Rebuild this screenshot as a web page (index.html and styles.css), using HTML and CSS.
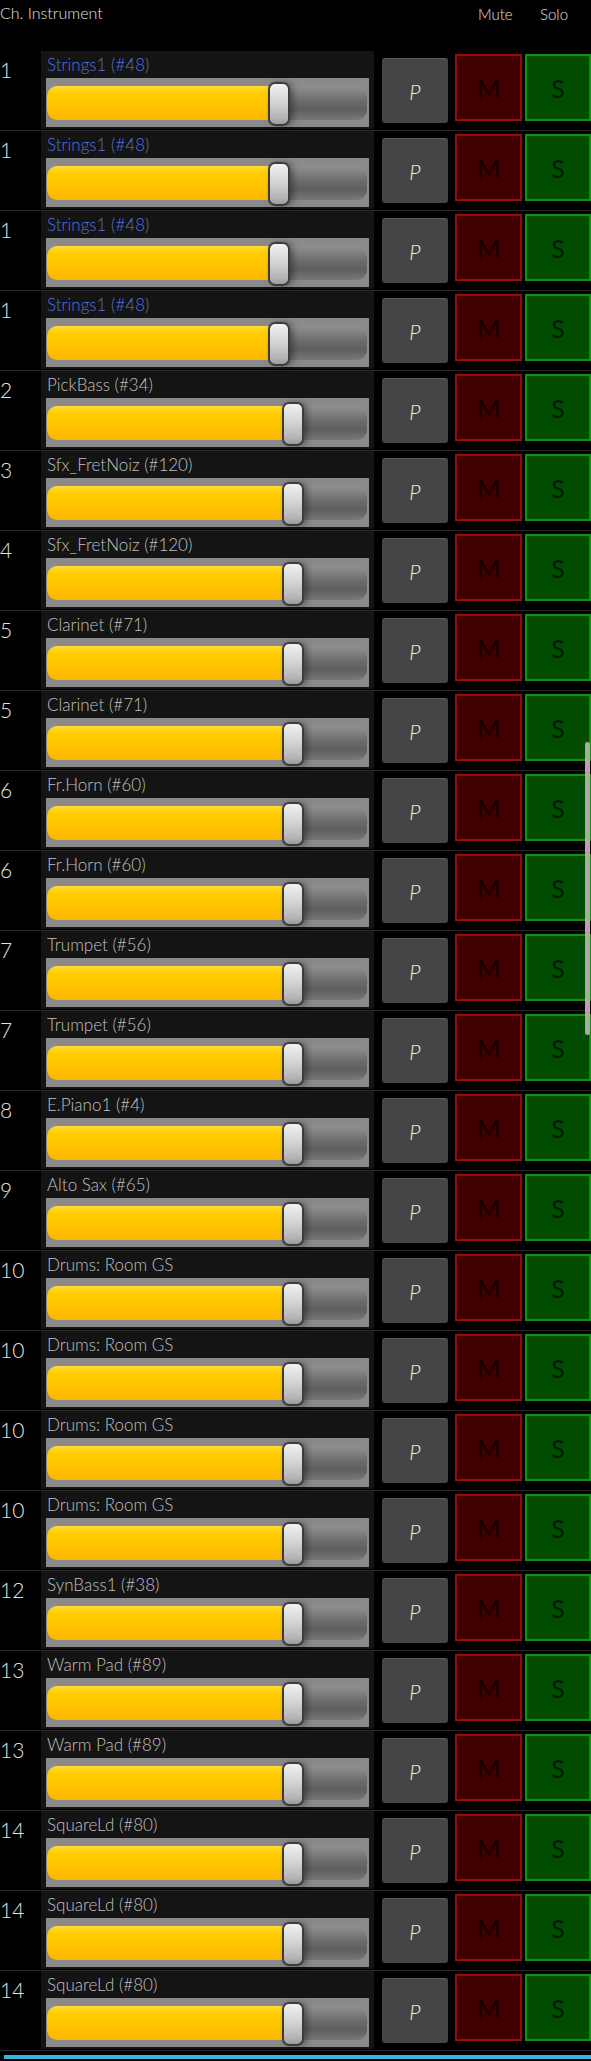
FILE: index.html
```html
<!DOCTYPE html>
<html lang="en">
<head>
    <meta charset="UTF-8">
    <meta name="viewport" content="width=device-width, initial-scale=1.0">
    <title>Mixer</title>
    <link rel="stylesheet" href="styles.css">
</head>
<body>
    <div class="header">
        <span class="title">Ch. Instrument</span>
        <span class="col-mute">Mute</span>
        <span class="col-solo">Solo</span>
    </div>

    <div id="channels"></div>

    <div class="edge-glow"></div>
    <div class="scrollbar"></div>

    <script>
        // channel, program name, selected, thumb offset in px
        const channels = [
            [1, 'Strings1 (#48)', true, 221],
            [1, 'Strings1 (#48)', true, 221],
            [1, 'Strings1 (#48)', true, 221],
            [1, 'Strings1 (#48)', true, 221],
            [2, 'PickBass (#34)', false, 235],
            [3, 'Sfx_FretNoiz (#120)', false, 235],
            [4, 'Sfx_FretNoiz (#120)', false, 235],
            [5, 'Clarinet (#71)', false, 235],
            [5, 'Clarinet (#71)', false, 235],
            [6, 'Fr.Horn (#60)', false, 235],
            [6, 'Fr.Horn (#60)', false, 235],
            [7, 'Trumpet (#56)', false, 235],
            [7, 'Trumpet (#56)', false, 235],
            [8, 'E.Piano1 (#4)', false, 235],
            [9, 'Alto Sax (#65)', false, 235],
            [10, 'Drums: Room GS', false, 235],
            [10, 'Drums: Room GS', false, 235],
            [10, 'Drums: Room GS', false, 235],
            [10, 'Drums: Room GS', false, 235],
            [12, 'SynBass1 (#38)', false, 235],
            [13, 'Warm Pad (#89)', false, 235],
            [13, 'Warm Pad (#89)', false, 235],
            [14, 'SquareLd (#80)', false, 235],
            [14, 'SquareLd (#80)', false, 235],
            [14, 'SquareLd (#80)', false, 235]
        ];

        const list = document.getElementById('channels');
        channels.forEach(([ch, name, selected, pos]) => {
            const row = document.createElement('div');
            row.className = 'row';
            row.innerHTML = `
                <div class="ch">${ch}</div>
                <div class="panel">
                    <div class="name${selected ? ' selected' : ''}">${name}</div>
                    <div class="slider" style="--pos: ${pos}px">
                        <div class="track"><div class="fill"></div></div>
                        <div class="thumb"></div>
                    </div>
                </div>
                <div class="btn-p">P</div>
                <div class="btn-m">M</div>
                <div class="btn-s">S</div>`;
            list.appendChild(row);
        });
    </script>
</body>
</html>
```

FILE: styles.css
```css
body {
    margin: 0;
    background-color: #000;
    color: #d8d8d8;
    font-family: 'Lato', 'Open Sans', sans-serif;
    font-weight: 300;
    overflow: hidden;
}

.header {
    display: flex;
    height: 51px;
    font-size: 16px;
    color: #e0e0e0;
}

.title {
    flex: 1;
    padding-top: 3px;
}

.col-mute,
.col-solo {
    padding-top: 5px;
    font-size: 15px;
}

.col-mute {
    width: 62px;
}

.col-solo {
    width: 51px;
}

.row {
    display: flex;
    height: 79px;
    border-bottom: 1px solid #2a2a2a;
}

.ch {
    width: 41px;
    padding-top: 6px;
    font-size: 21px;
    color: #e4e4e4;
}

.panel {
    width: 333px;
    height: 78px;
    background-color: #141414;
}

.name {
    height: 27px;
    padding: 4px 0 0 6px;
    box-sizing: border-box;
    font-size: 17px;
    line-height: 20px;
    color: #c0c0c0;
}

.name.selected {
    color: #5272dc;
}

.slider {
    position: relative;
    width: 323px;
    height: 49px;
    margin-left: 5px;
    background-color: #8a8a8a;
}

.track {
    position: absolute;
    top: 8px;
    left: 1px;
    right: 2px;
    height: 34px;
    border-radius: 10px;
    overflow: hidden;
    background: linear-gradient(#8f908f, #6a6c6a 45%, #5d605d 70%, #777 100%);
}

.fill {
    width: calc(var(--pos) + 11px);
    height: 100%;
    background: linear-gradient(#ffd83a, #ffcf00 20%, #ffc400 60%, #ffb700);
}

.thumb {
    position: absolute;
    top: 4px;
    left: calc(var(--pos) + 1px);
    width: 22px;
    height: 44px;
    box-sizing: border-box;
    border: 2px solid #3c3c3c;
    border-radius: 7px;
    background: linear-gradient(#f2f2f2, #d4d4d4 45%, #b4b4b4 85%, #9a9a9a);
    box-shadow: 3px 0 6px rgba(0, 0, 0, 0.35);
}

.btn-p,
.btn-m,
.btn-s {
    display: flex;
    align-items: center;
    justify-content: center;
    box-sizing: border-box;
}

.btn-p {
    width: 66px;
    height: 65px;
    margin: 7px 0 0 8px;
    background-color: #454545;
    border-top: 1px solid #5c5c5c;
    border-radius: 3px;
    color: #ececec;
    font-size: 21px;
    font-style: italic;
}

.btn-m,
.btn-s {
    height: 67px;
    font-size: 25px;
    font-weight: 400;
}

.btn-m {
    width: 67px;
    margin: 3px 0 0 7px;
    background-color: #400000;
    border: 2px solid #9a0a0a;
    color: #140000;
}

.btn-s {
    width: 66px;
    margin: 3px 0 0 3px;
    background-color: #004c00;
    border: 2px solid #10920f;
    color: #001800;
}

.edge-glow {
    height: 4px;
    margin: 4px 0 0 4px;
    background-color: #35b4e2;
}

/* overlay scroll indicator */
.scrollbar {
    position: absolute;
    top: 742px;
    left: 585px;
    width: 5px;
    height: 293px;
    border-radius: 3px;
    background-color: #a9a9a9;
}
```
